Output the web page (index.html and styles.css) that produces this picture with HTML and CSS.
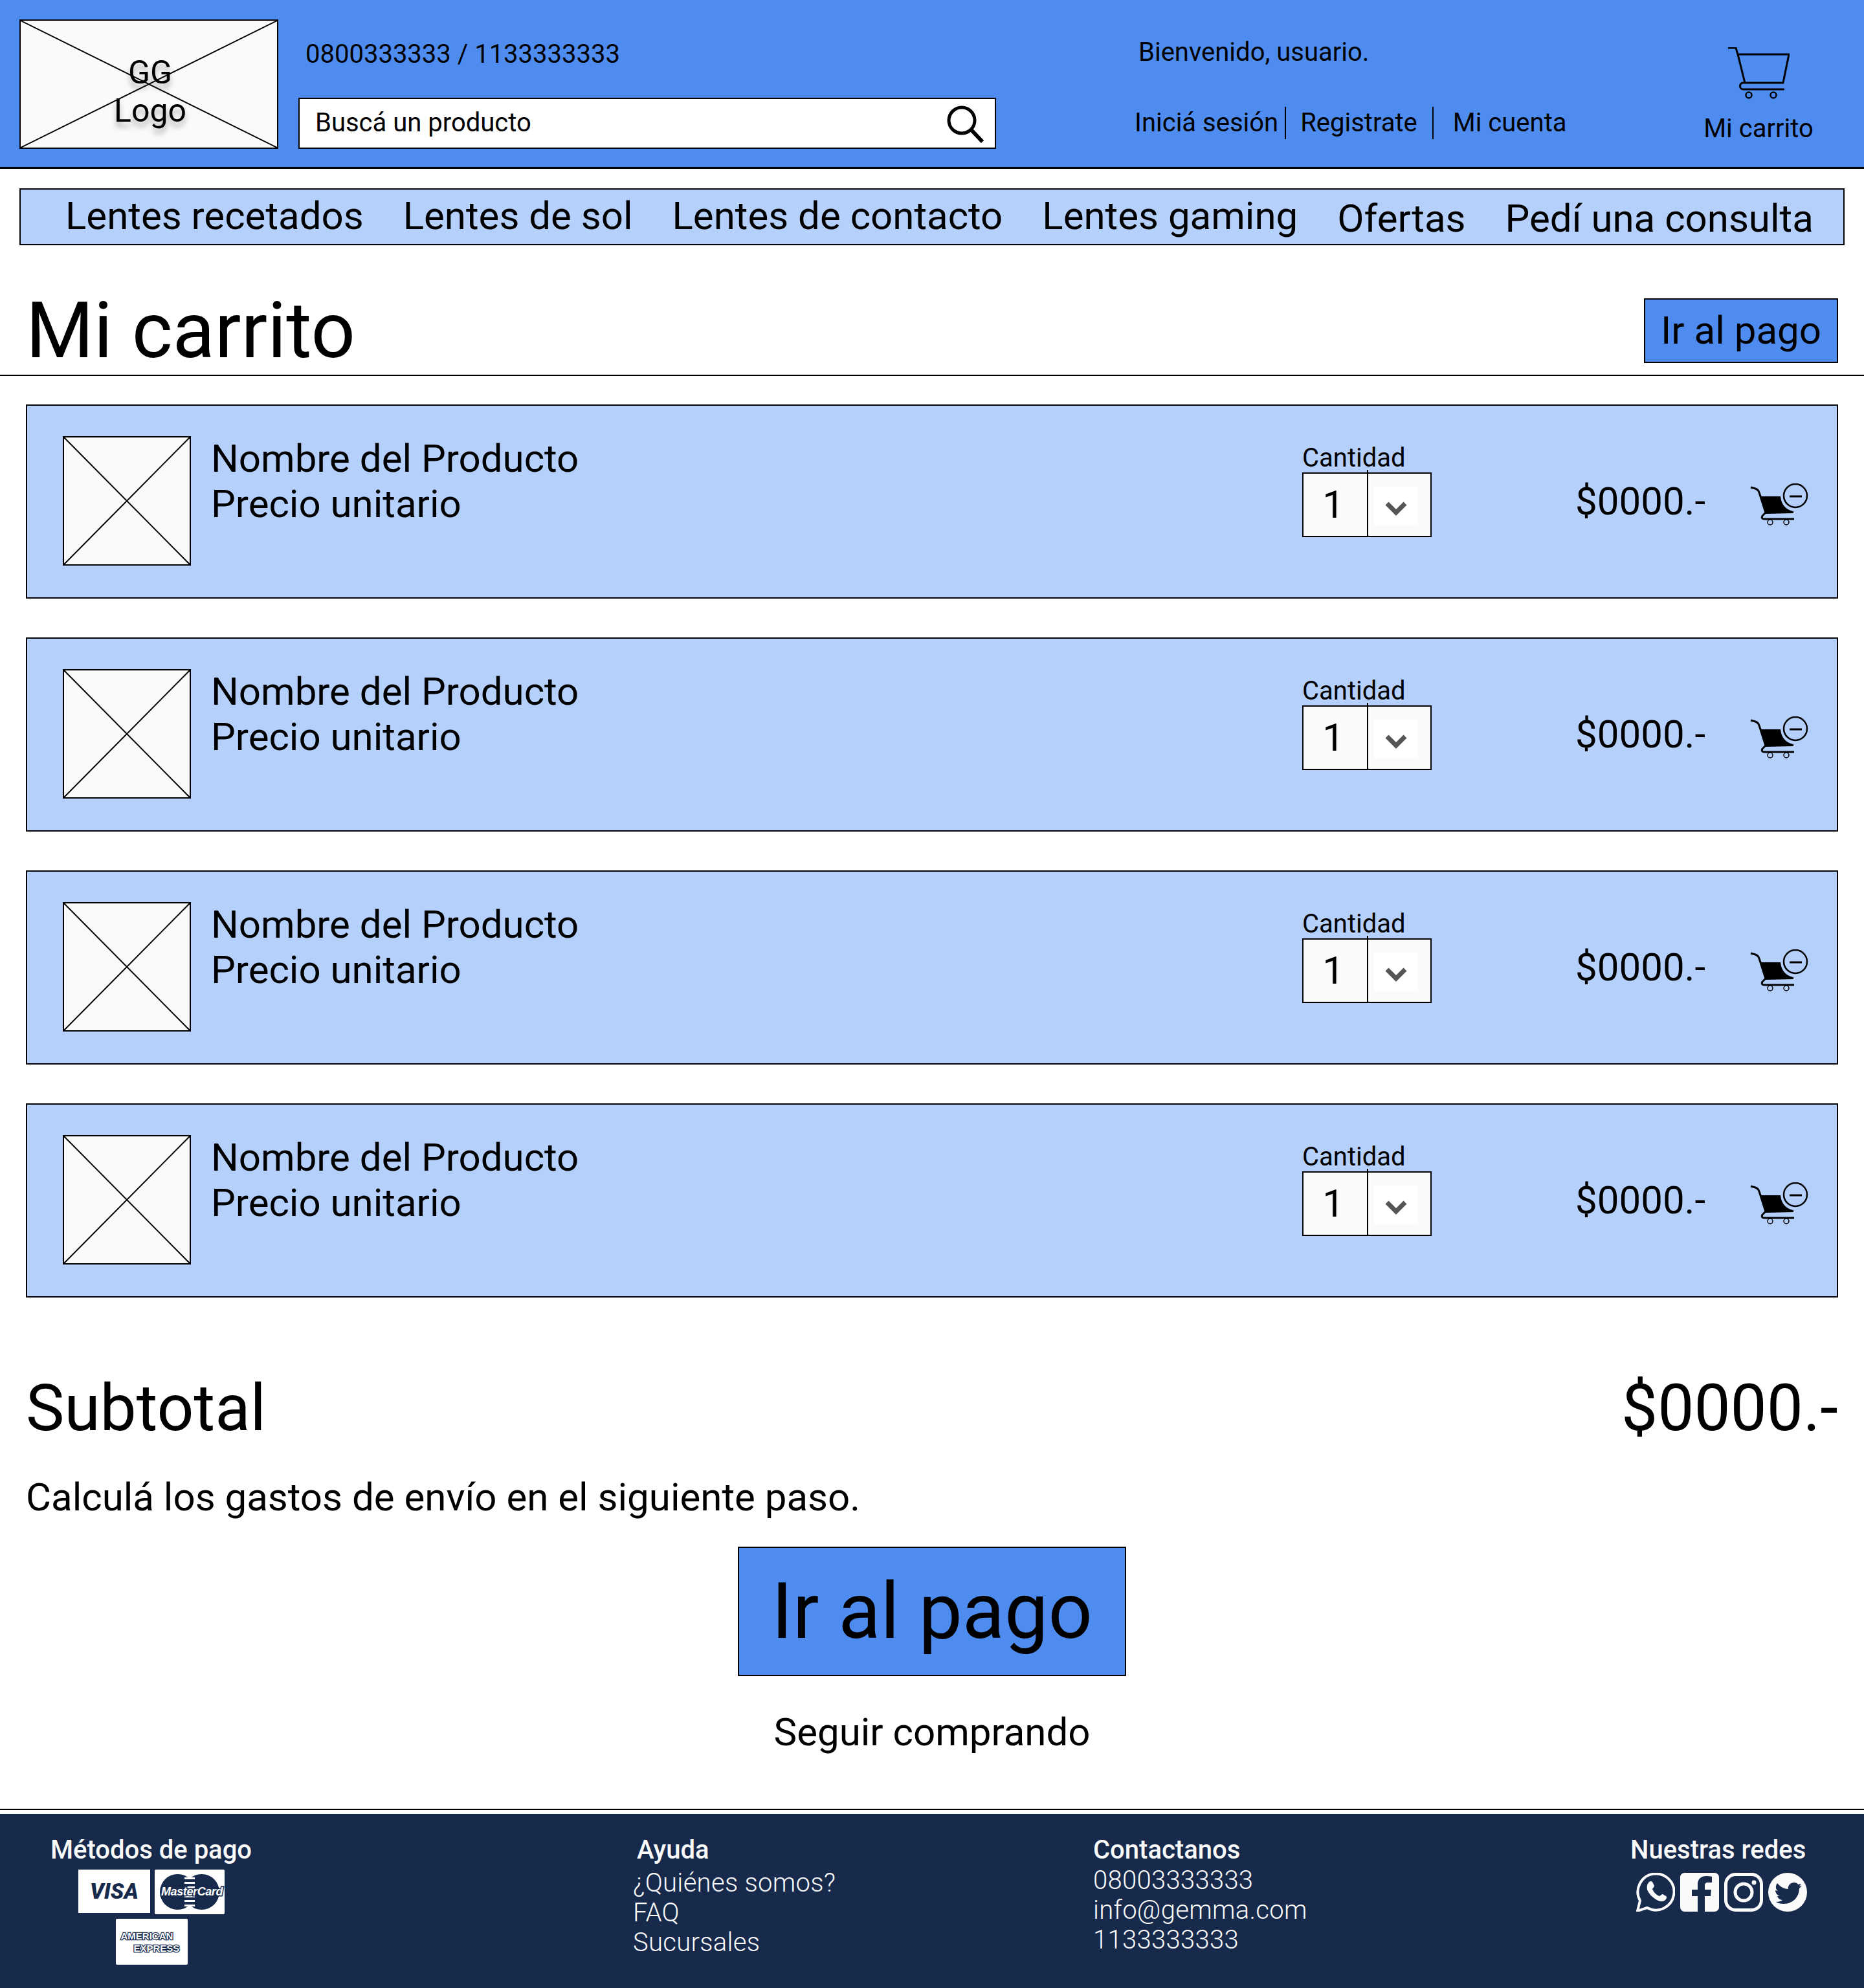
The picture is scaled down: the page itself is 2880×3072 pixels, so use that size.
FILE: index.html
```html
<!DOCTYPE html>
<html lang="es">
<head>
    <meta charset="UTF-8">
    <title>Mi carrito</title>
    <link rel="stylesheet" href="styles.css">
</head>
<body>
    <svg class="defs" width="0" height="0">
        <symbol id="cross" viewBox="0 0 100 100" preserveAspectRatio="none">
            <path d="M0 0L100 100M100 0L0 100" stroke="#000" stroke-width="2" vector-effect="non-scaling-stroke" fill="none"/>
        </symbol>
        <symbol id="cart-minus" viewBox="0 0 90 66">
            <path d="M1 6l7 2c3 1 5 3 6 6l10 31-4 4c-3 3-2 6 2 6h46" fill="none" stroke="#000" stroke-width="3"/>
            <path d="M16 20h31c1 12 8 21 20 23v3l-43 1z" fill="#000"/>
            <circle cx="31" cy="60" r="4" fill="none" stroke="#000" stroke-width="1.500"/>
            <circle cx="56" cy="60" r="4" fill="none" stroke="#000" stroke-width="1.500"/>
            <circle cx="70" cy="19" r="18" fill="none" stroke="#000" stroke-width="2.500"/>
            <path d="M61 20h19" stroke="#000" stroke-width="3"/>
        </symbol>
    </svg>

    <header class="top-header">
        <div class="logo">
            <svg class="cross"><use href="#cross"/></svg>
            <span>GG</span>
            <span>Logo</span>
        </div>
        <div class="header-mid">
            <p class="phones">0800333333 / 1133333333</p>
            <div class="search">
                <span>Buscá un producto</span>
                <svg width="60" height="60" viewBox="0 0 60 60"><circle cx="25" cy="25" r="20" fill="none" stroke="#000" stroke-width="5"/><path d="M39 39l18 19" stroke="#000" stroke-width="6"/></svg>
            </div>
        </div>
        <div class="account">
            <p class="welcome">Bienvenido, usuario.</p>
            <div class="account-links">
                <a class="first">Iniciá sesión</a>
                <a class="second">Registrate</a>
                <a class="third">Mi cuenta</a>
            </div>
        </div>
        <div class="header-cart">
            <svg width="96" height="82" viewBox="0 0 96 82"><path d="M1 1h12l3 10 11 44h59l9-44H16M27 55h-3c-6 0-6 10 0 10h64" fill="none" stroke="#000" stroke-width="3"/><circle cx="33" cy="74" r="4.500" fill="none" stroke="#000" stroke-width="2.500"/><circle cx="71" cy="74" r="4.500" fill="none" stroke="#000" stroke-width="2.500"/></svg>
            <span>Mi carrito</span>
        </div>
    </header>

    <nav class="main-nav">
        <a>Lentes recetados</a>
        <a>Lentes de sol</a>
        <a>Lentes de contacto</a>
        <a>Lentes gaming</a>
        <a class="low">Ofertas</a>
        <a class="low">Pedí una consulta</a>
    </nav>

    <section class="title-row">
        <h1>Mi carrito</h1>
        <a class="pay-btn">Ir al pago</a>
    </section>

    <main class="cart-list">
        <article class="cart-item">
            <div class="thumb"><svg class="cross"><use href="#cross"/></svg></div>
            <div class="item-info">
                <p>Nombre del Producto</p>
                <p>Precio unitario</p>
            </div>
            <div class="qty">
                <label>Cantidad</label>
                <div class="qty-box">
                    <span class="qty-num">1</span>
                    <span class="qty-arrow"><i><svg width="36" height="24" viewBox="0 0 36 24"><path d="M4 4l14 14L32 4" fill="none" stroke="#555" stroke-width="7"/></svg></i></span>
                </div>
            </div>
            <p class="item-price">$0000.-</p>
            <svg class="remove" width="90" height="66"><use href="#cart-minus"/></svg>
        </article>
        <article class="cart-item">
            <div class="thumb"><svg class="cross"><use href="#cross"/></svg></div>
            <div class="item-info">
                <p>Nombre del Producto</p>
                <p>Precio unitario</p>
            </div>
            <div class="qty">
                <label>Cantidad</label>
                <div class="qty-box">
                    <span class="qty-num">1</span>
                    <span class="qty-arrow"><i><svg width="36" height="24" viewBox="0 0 36 24"><path d="M4 4l14 14L32 4" fill="none" stroke="#555" stroke-width="7"/></svg></i></span>
                </div>
            </div>
            <p class="item-price">$0000.-</p>
            <svg class="remove" width="90" height="66"><use href="#cart-minus"/></svg>
        </article>
        <article class="cart-item">
            <div class="thumb"><svg class="cross"><use href="#cross"/></svg></div>
            <div class="item-info">
                <p>Nombre del Producto</p>
                <p>Precio unitario</p>
            </div>
            <div class="qty">
                <label>Cantidad</label>
                <div class="qty-box">
                    <span class="qty-num">1</span>
                    <span class="qty-arrow"><i><svg width="36" height="24" viewBox="0 0 36 24"><path d="M4 4l14 14L32 4" fill="none" stroke="#555" stroke-width="7"/></svg></i></span>
                </div>
            </div>
            <p class="item-price">$0000.-</p>
            <svg class="remove" width="90" height="66"><use href="#cart-minus"/></svg>
        </article>
        <article class="cart-item">
            <div class="thumb"><svg class="cross"><use href="#cross"/></svg></div>
            <div class="item-info">
                <p>Nombre del Producto</p>
                <p>Precio unitario</p>
            </div>
            <div class="qty">
                <label>Cantidad</label>
                <div class="qty-box">
                    <span class="qty-num">1</span>
                    <span class="qty-arrow"><i><svg width="36" height="24" viewBox="0 0 36 24"><path d="M4 4l14 14L32 4" fill="none" stroke="#555" stroke-width="7"/></svg></i></span>
                </div>
            </div>
            <p class="item-price">$0000.-</p>
            <svg class="remove" width="90" height="66"><use href="#cart-minus"/></svg>
        </article>
    </main>

    <section class="summary">
        <div class="subtotal">
            <span>Subtotal</span>
            <span>$0000.-</span>
        </div>
        <p class="shipping">Calculá los gastos de envío en el siguiente paso.</p>
        <a class="pay-btn big">Ir al pago</a>
        <a class="keep-buying">Seguir comprando</a>
    </section>

    <hr class="footer-line">

    <footer class="site-footer">
        <div class="col-pay">
            <h4>Métodos de pago</h4>
            <div class="cards">
                <span class="card visa">VISA</span>
                <span class="card mc"><b></b><b></b><i></i><em>MasterCard</em></span>
                <span class="card amex"><span>AMERICAN</span><span class="ex">EXPRESS</span></span>
            </div>
        </div>
        <div class="col-help">
            <h4>Ayuda</h4>
            <a>¿Quiénes somos?</a>
            <a>FAQ</a>
            <a>Sucursales</a>
        </div>
        <div class="col-contact">
            <h4>Contactanos</h4>
            <a>08003333333</a>
            <a>info@gemma.com</a>
            <a>1133333333</a>
        </div>
        <div class="col-social">
            <h4>Nuestras redes</h4>
            <div class="social-icons">
                <svg width="60" height="60" viewBox="0 0 60 60"><path d="M2 59l4-16A28 28 0 1 1 17 54z" fill="none" stroke="#fafafa" stroke-width="4"/><path d="M20 14c3-2 5-1 6 2l2 4c0 2-2 3-3 5 2 5 6 9 11 11 2-1 3-3 5-3l5 3c2 1 1 4-1 6-3 3-8 3-13 0-7-4-12-9-15-16-1-5 0-9 3-12z" fill="#fafafa"/></svg>
                <svg width="60" height="60" viewBox="0 0 60 60"><path d="M7 0h46c4 0 7 3 7 7v46c0 4-3 7-7 7H38V36h9l1-10H38v-6c0-3 1-5 5-5h6V6c-3-1-6-1-9-1-8 0-13 5-13 13v8h-9v10h9v24H7c-4 0-7-3-7-7V7c0-4 3-7 7-7z" fill="#fafafa"/></svg>
                <svg width="60" height="60" viewBox="0 0 60 60"><rect x="2.500" y="2.500" width="55" height="55" rx="15" fill="none" stroke="#fafafa" stroke-width="5"/><circle cx="30" cy="30" r="13" fill="none" stroke="#fafafa" stroke-width="5"/><circle cx="46" cy="15" r="3.500" fill="#fafafa"/></svg>
                <svg width="60" height="60" viewBox="0 0 60 60"><circle cx="30" cy="30" r="30" fill="#fafafa"/><path d="M14 16c5 6 11 9 17 9-1-6 4-10 9-10 3 0 5 1 6 3l5-1-3 4 4-1-4 4c0 13-10 24-24 24-5 0-9-1-12-3 4 0 8-1 10-3-4 0-7-3-8-6h4c-4-1-7-5-7-9l4 1c-4-3-4-8-1-12z" fill="#172a4c"/></svg>
            </div>
        </div>
    </footer>
</body>
</html>
```

FILE: styles.css
```css
* {
    box-sizing: border-box;
}

body {
    margin: 0;
    background-color: #fff;
    color: #000;
    font-family: Roboto, "Liberation Sans", sans-serif;
}

p, h1, h4 {
    margin: 0;
    font-weight: 400;
}

.defs {
    position: absolute;
}

.cross {
    position: absolute;
    top: 0;
    left: 0;
    width: 100%;
    height: 100%;
}

/* cabecera */
.top-header {
    display: flex;
    height: 261px;
    padding: 30px 0 0 30px;
    background-color: #4f8cf0;
    border-bottom: 3px solid #000;
}

.logo {
    position: relative;
    display: flex;
    flex-direction: column;
    justify-content: center;
    width: 400px;
    height: 200px;
    padding: 24px 0 0 4px;
    background-color: #fafafa;
    border: 2px solid #000;
    font-size: 50px;
    line-height: 59px;
    text-align: center;
    text-shadow: 0 8px 8px rgba(0, 0, 0, .3);
}

.header-mid {
    width: 1078px;
    margin-left: 31px;
}

.phones {
    margin: 32px 0 0 11px;
    font-size: 40px;
    line-height: 44px;
}

.search {
    display: flex;
    justify-content: space-between;
    align-items: center;
    height: 79px;
    margin-top: 45px;
    padding: 0 16px 0 24px;
    background-color: #fff;
    border: 2px solid #000;
    font-size: 40px;
    line-height: 76px;
}

.search span {
    margin-top: -2px;
}

.account {
    width: 800px;
    margin-left: 214px;
}

.welcome {
    margin: 30px 0 0 6px;
    font-size: 40px;
    line-height: 42px;
}

.account-links {
    display: flex;
    align-items: center;
    height: 50px;
    margin-top: 63px;
    font-size: 40px;
}

.account-links a {
    line-height: 50px;
}

.account-links .second {
    margin-left: 10px;
    padding-left: 22px;
    padding-right: 23px;
    border-left: 2px solid #000;
}

.account-links .third {
    padding-left: 30px;
    border-left: 2px solid #000;
}

.header-cart {
    display: flex;
    flex-direction: column;
    align-items: center;
    width: 180px;
    margin-left: 74px;
    font-size: 40px;
}

.header-cart svg {
    margin-top: 43px;
}

.header-cart span {
    margin-top: 20px;
}

/* menu */
.main-nav {
    display: flex;
    gap: 61px;
    height: 88px;
    margin: 30px 30px 0;
    padding-left: 69px;
    background-color: #b5d0fb;
    border: 2px solid #000;
    font-size: 60px;
    line-height: 82px;
}

.main-nav .low {
    padding-top: 4px;
}

.title-row {
    display: flex;
    justify-content: space-between;
    align-items: center;
    height: 202px;
    padding: 64px 40px 0 40px;
    border-bottom: 2px solid #000;
}

.title-row h1 {
    font-size: 120px;
    line-height: 140px;
}

.pay-btn {
    display: block;
    width: 300px;
    height: 100px;
    background-color: #4f8cf0;
    border: 2px solid #000;
    font-size: 60px;
    line-height: 96px;
    text-align: center;
}

/* productos */
.cart-list {
    display: flex;
    flex-direction: column;
    gap: 60px;
    padding: 44px 40px 0;
}

.cart-item {
    display: flex;
    height: 300px;
    padding: 47px 0 0 55px;
    background-color: #b5d0fb;
    border: 2px solid #000;
}

.thumb {
    position: relative;
    width: 198px;
    height: 200px;
    background-color: #fafafa;
    border: 2px solid #000;
}

.item-info {
    width: 1686px;
    margin-left: 31px;
    font-size: 60px;
    line-height: 70px;
}

.qty {
    width: 200px;
    padding-top: 12px;
}

.qty label {
    display: block;
    font-size: 40px;
    line-height: 44px;
}

.qty-box {
    display: flex;
    height: 100px;
    background-color: #fafafa;
    border: 2px solid #000;
}

.qty-num {
    position: relative;
    width: 100px;
    padding-right: 6px;
    border-right: 2px solid #000;
    font-size: 60px;
    line-height: 96px;
    text-align: center;
}

.qty-num::after {
    content: "";
    position: absolute;
    top: -6px;
    right: -2px;
    width: 2px;
    height: 6px;
    background-color: #000;
}

.qty-arrow {
    display: flex;
    align-items: center;
    padding: 4px 0 0 9px;
}

.qty-arrow i {
    display: flex;
    justify-content: center;
    align-items: center;
    width: 68px;
    height: 60px;
    padding-top: 8px;
    background-color: #fff;
}

.item-price {
    width: 270px;
    margin-left: 222px;
    padding-top: 66px;
    font-size: 60px;
    line-height: 70px;
}

.remove {
    flex: none;
    margin-top: 73px;
}

/* resumen */
.summary {
    display: flex;
    flex-direction: column;
    padding: 0 40px;
}

.subtotal {
    display: flex;
    justify-content: space-between;
    margin-top: 112px;
    font-size: 100px;
    line-height: 118px;
}

.shipping {
    margin-top: 44px;
    font-size: 60px;
    line-height: 70px;
}

.pay-btn.big {
    align-self: center;
    width: 600px;
    height: 200px;
    margin-top: 41px;
    font-size: 120px;
    line-height: 196px;
}

.keep-buying {
    align-self: center;
    margin-top: 52px;
    font-size: 60px;
    line-height: 70px;
}

/* pie */
.footer-line {
    height: 2px;
    margin: 83px 0 6px;
    background-color: #000;
    border: none;
}

.site-footer {
    display: flex;
    height: 270px;
    padding-top: 32px;
    background-color: #172a4c;
    color: #fafafa;
}

.site-footer h4 {
    font-size: 40px;
    font-weight: 500;
    line-height: 47px;
    white-space: nowrap;
}

.site-footer a {
    display: block;
    font-size: 40px;
    font-weight: 300;
    line-height: 46px;
    letter-spacing: .3px;
}

.col-pay {
    width: 978px;
    padding-left: 78px;
}

.cards {
    display: flex;
    flex-wrap: wrap;
    justify-content: center;
    align-items: flex-start;
    gap: 7px;
    width: 312px;
    margin-top: 7px;
}

.card {
    display: block;
    background-color: #fff;
    color: #172a4c;
}

.visa {
    width: 111px;
    height: 67px;
    font-size: 34px;
    font-style: italic;
    font-weight: 900;
    line-height: 67px;
    text-align: center;
}

.mc {
    position: relative;
    width: 108px;
    height: 69px;
    border-radius: 2px;
}

.mc b {
    position: absolute;
    top: 7px;
    left: 8px;
    width: 55px;
    height: 55px;
    background-color: #172a4c;
    border-radius: 50%;
}

.mc b + b {
    left: 45px;
}

.mc i {
    position: absolute;
    top: 12px;
    left: 46px;
    width: 16px;
    height: 45px;
    background: repeating-linear-gradient(#fff 0 3px, #172a4c 3px 7px);
}

.mc em {
    position: absolute;
    top: 21px;
    left: 10px;
    color: #fff;
    font-family: "Liberation Sans", sans-serif;
    font-size: 18px;
    font-weight: 700;
    letter-spacing: -.4px;
    line-height: 26px;
    -webkit-text-stroke: 3px #172a4c;
    paint-order: stroke fill;
}

.amex {
    width: 111px;
    height: 71px;
    padding: 17px 0 0 8px;
    border-radius: 2px;
    color: #fff;
    font-family: "Liberation Sans", sans-serif;
    font-size: 15px;
    font-weight: 700;
    line-height: 19px;
    -webkit-text-stroke: 2.500px #172a4c;
    paint-order: stroke fill;
}

.amex span {
    display: block;
}

.amex .ex {
    padding-left: 20px;
}

.col-help {
    width: 711px;
}

.col-help h4 {
    padding-left: 6px;
}

.col-help a:first-of-type {
    margin-top: 5px;
}

.col-contact {
    width: 830px;
}

.col-contact a {
    line-height: 46px;
}

.col-contact a:first-of-type {
    margin-top: 1px;
}

.col-social {
    flex: 1;
}

.social-icons {
    display: flex;
    gap: 8px;
    margin: 12px 0 0 9px;
}
```
